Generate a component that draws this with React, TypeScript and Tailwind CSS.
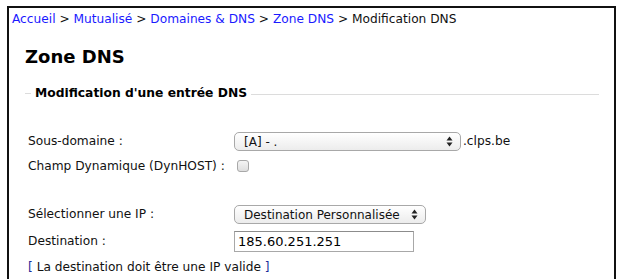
function Arrows() {
  return (
    <svg width="7" height="11" viewBox="0 0 7 11" className="shrink-0">
      <path d="M3.5 0.5 L6.5 4.5 L0.5 4.5 Z" fill="#222" />
      <path d="M3.5 10.5 L6.5 6.5 L0.5 6.5 Z" fill="#222" />
    </svg>
  );
}

function Select({ label, width }: { label: string; width: string }) {
  return (
    <div
      className={`${width} h-[19px] flex items-center justify-between pl-[9px] pr-[7px] rounded-[5px] border border-[#a8a8a8] bg-gradient-to-b from-white to-[#ececec] text-[12px] text-[#111]`}
    >
      <span className="leading-none">{label}</span>
      <Arrows />
    </div>
  );
}

function App() {
  const font = { fontFamily: '"DejaVu Sans", Verdana, sans-serif' };
  return (
    <div className="w-[624px] h-[279px] bg-white overflow-hidden pt-[6px] pl-[7px]" style={font}>
      <div className="w-[609px] h-[300px] border-2 border-[#111] border-b-0">
        {/* breadcrumb */}
        <div className="pl-[3px] pt-[3px] text-[12.2px] leading-[16px] text-[#111]">
          <span className="text-[#1a1aff]">Accueil</span> &gt;{" "}
          <span className="text-[#1a1aff]">Mutualisé</span> &gt;{" "}
          <span className="text-[#1a1aff]">Domaines &amp; DNS</span> &gt;{" "}
          <span className="text-[#1a1aff]">Zone DNS</span> &gt; Modification DNS
        </div>

        <div className="pl-[16px] pr-[15px]">
          <h1 className="mt-[19px] text-[18px] leading-[22px] font-bold text-black">Zone DNS</h1>

          {/* fieldset legend */}
          <div className="mt-[17px] flex items-center">
            <div className="w-[6px] h-px bg-[#dcdcdc]" />
            <div className="px-[4px] text-[12.3px] leading-[16px] font-bold text-black">
              Modification d'une entrée DNS
            </div>
            <div className="flex-1 h-px bg-[#dcdcdc] mt-[2px]" />
          </div>

          <div className="pl-[3px] text-[12.2px] text-[#111]">
            <div className="mt-[31px] flex items-center h-[19px]">
              <div className="w-[206px]">Sous-domaine :</div>
              <Select label="[A] - ." width="w-[227px]" />
              <span className="ml-[2px]">.clps.be</span>
            </div>

            <div className="mt-[7px] flex items-center h-[16px]">
              <div className="w-[209px]">Champ Dynamique (DynHOST) :</div>
              <div className="w-[12px] h-[12px] rounded-[3px] border border-[#a8a8a8] bg-gradient-to-b from-[#f4f4f4] to-[#dedede]" />
            </div>

            <div className="mt-[31px] flex items-center h-[19px]">
              <div className="w-[206px]">Sélectionner une IP :</div>
              <Select label="Destination Personnalisée" width="w-[192px]" />
            </div>

            <div className="mt-[7px] flex items-center h-[21px]">
              <div className="w-[206px]">Destination :</div>
              <div className="w-[180px] h-[21px] border border-[#a8a8a8] border-t-[#8c8c8c] flex items-center pl-[3px] text-[13px] text-black">
                185.60.251.251
              </div>
            </div>

            <div className="mt-[7px] leading-[16px]">
              <span className="text-[#1a2a9a]">[</span> La destination doit être une IP valide{" "}
              <span className="text-[#1a2a9a]">]</span>
            </div>
          </div>
        </div>
      </div>
    </div>
  );
}

export default App;
